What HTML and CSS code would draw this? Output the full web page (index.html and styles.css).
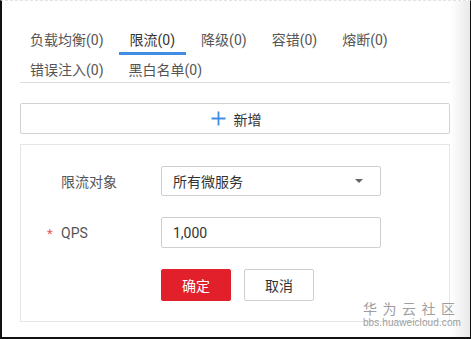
FILE: index.html
```html
<!DOCTYPE html>
<html>
<head>
  <meta charset="utf-8">
  <title>限流</title>
  <link rel="stylesheet" href="styles.css">
</head>
<body>
  <div class="frame">
    <main class="content">
      <nav class="tabs">
        <span class="tab">负载均衡(0)</span>
        <span class="tab active">限流(0)</span>
        <span class="tab">降级(0)</span>
        <span class="tab">容错(0)</span>
        <span class="tab">熔断(0)</span>
        <span class="tab">错误注入(0)</span>
        <span class="tab">黑白名单(0)</span>
      </nav>

      <button class="add-btn">
        <svg class="plus" width="15" height="15" viewBox="0 0 15 15">
          <path d="M7.5 0.5v14M0.5 7.5h14" stroke="#3f8ee3" stroke-width="1.8" fill="none"/>
        </svg>
        <span>新增</span>
      </button>

      <section class="panel">
        <div class="row">
          <label class="label">限流对象</label>
          <div class="control select">
            <span>所有微服务</span>
            <i class="caret"></i>
          </div>
        </div>
        <div class="row">
          <label class="label"><span class="req">*</span>QPS</label>
          <div class="control">1,000</div>
        </div>
        <div class="row">
          <span class="label"></span>
          <div class="actions">
            <button class="btn primary">确定</button>
            <button class="btn">取消</button>
          </div>
        </div>
      </section>
    </main>
    <div class="shade"></div>

    <div class="watermark">
      <div class="wm-title">华为云社区</div>
      <div class="wm-url">bbs.huaweicloud.com</div>
    </div>
  </div>
</body>
</html>
```

FILE: styles.css
```css
html, body {
    margin: 0;
    padding: 0;
    background: #fff;
}
body {
    font-family: Roboto, "Noto Sans CJK SC", sans-serif;
    font-size: 14px;
    color: #333;
}
.frame {
    position: relative;
    display: flex;
    width: 471px;
    height: 339px;
    box-sizing: border-box;
    border-left: 2px solid #111;
    border-right: 1px solid #111;
    border-bottom: 2px solid #111;
    border-top: 1px dashed #e2e2e2;
    overflow: hidden;
}
.content {
    flex: 1;
    padding: 26px 0 0 18px;
}
.shade {
    width: 20px;
    background: linear-gradient(to right, #fff, #e9e9e9);
}

/* tabs */
.tabs {
    display: flex;
    flex-wrap: wrap;
    column-gap: 5px;
    row-gap: 5px;
    width: 430px;
    border-bottom: 1px solid #dcdcdc;
}
.tab {
    height: 28px;
    line-height: 27px;
    padding: 0 10px;
    margin-bottom: -3px;
    box-sizing: border-box;
    border-bottom: 3px solid transparent;
    color: #555;
    white-space: nowrap;
}
.tab.active {
    padding: 0 11px;
    color: #333;
    border-bottom-color: #3f8ee3;
}

/* add button */
.add-btn {
    display: flex;
    align-items: center;
    justify-content: center;
    gap: 8px;
    width: 430px;
    height: 31px;
    margin-top: 20px;
    padding: 0;
    border: 1px solid #d2d2d2;
    border-radius: 2px;
    background: #fff;
    font: inherit;
    color: #333;
}
.add-btn .plus {
    margin-left: 2px;
}

/* form panel */
.panel {
    width: 430px;
    height: 178px;
    box-sizing: border-box;
    margin-top: 10px;
    padding: 21px 0 0 40px;
    border: 1px solid #e6e6e6;
    display: flex;
    flex-direction: column;
    gap: 21px;
}
.row {
    display: flex;
    align-items: center;
}
.label {
    width: 100px;
    color: #555;
}
.req {
    display: inline-block;
    width: 14px;
    margin-left: -14px;
    font-size: 13px;
    color: #e25a5e;
}
.control {
    display: flex;
    align-items: center;
    width: 220px;
    height: 31px;
    box-sizing: border-box;
    padding: 0 11px;
    border: 1px solid #cfcfcf;
    border-radius: 2px;
    color: #333;
}
.select {
    justify-content: space-between;
    height: 30px;
}
.caret {
    width: 0;
    height: 0;
    margin-right: 6px;
    border-left: 4px solid transparent;
    border-right: 4px solid transparent;
    border-top: 4px solid #666;
}
.actions {
    display: flex;
    gap: 13px;
}
.btn {
    width: 70px;
    height: 32px;
    padding: 0;
    border: 1px solid #cfcfcf;
    border-radius: 2px;
    background: #fff;
    font: inherit;
    color: #333;
}
.btn.primary {
    border-color: #e1202c;
    background: #e1202c;
    color: #fff;
}

/* watermark */
.watermark {
    position: absolute;
    right: 9px;
    bottom: 8px;
    color: #8e8e8e;
    opacity: 0.85;
}
.wm-title {
    font-size: 14px;
    line-height: 15px;
    letter-spacing: 5.5px;
    margin-right: -5px;
}
.wm-url {
    font-family: "Liberation Sans", sans-serif;
    font-size: 10px;
    line-height: 12px;
    letter-spacing: 0.1px;
}
```
